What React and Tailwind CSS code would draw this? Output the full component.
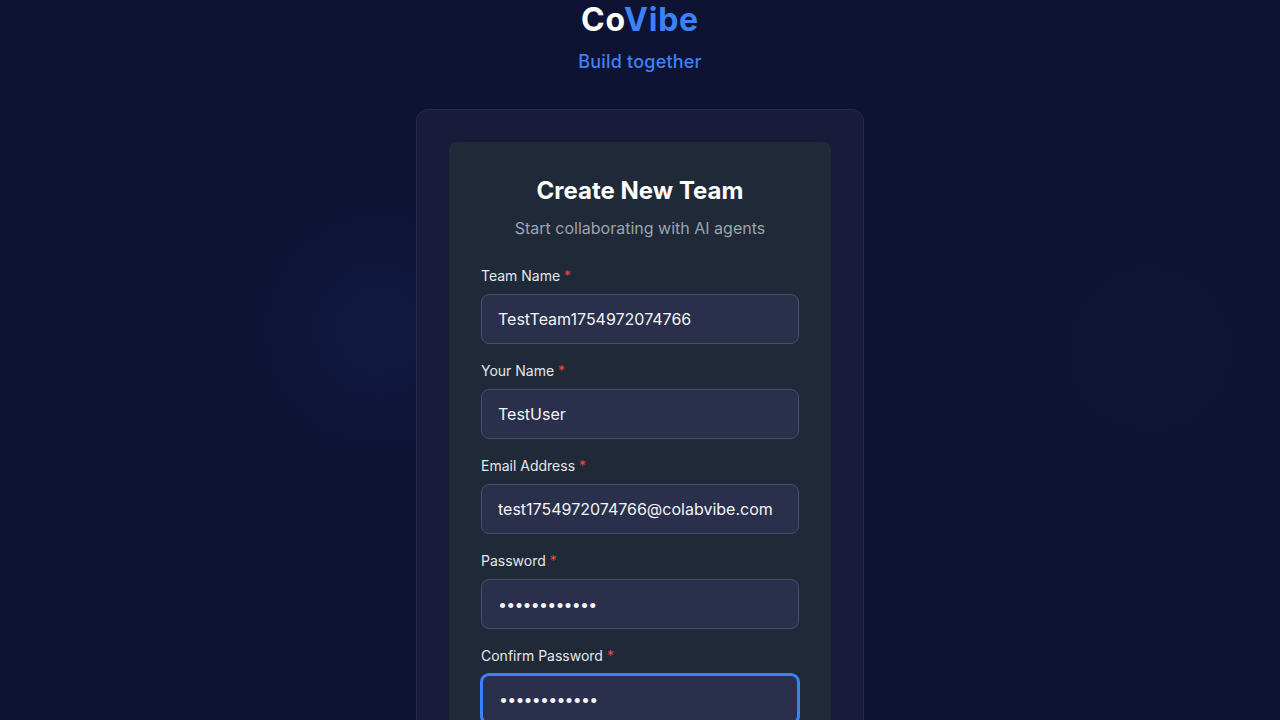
const fields = [
  { label: "Team Name", type: "text", value: "TestTeam1754972074766" },
  { label: "Your Name", type: "text", value: "TestUser" },
  { label: "Email Address", type: "email", value: "test1754972074766@colabvibe.com" },
  { label: "Password", type: "password", value: "password1234" },
  { label: "Confirm Password", type: "password", value: "password1234", focused: true },
];

export default function App() {
  return (
    <div className="relative min-h-screen h-[720px] overflow-hidden bg-[#0e1333] font-['Inter','Noto_Sans',sans-serif] text-white">
      {/* faint background glows */}
      <div className="pointer-events-none absolute left-[230px] top-[180px] h-[300px] w-[300px] rounded-full bg-[radial-gradient(circle,rgba(25,40,100,0.3)_0%,rgba(14,19,51,0)_70%)]" />
      <div className="pointer-events-none absolute left-[950px] top-[150px] h-[400px] w-[400px] rounded-full bg-[radial-gradient(circle,rgba(35,35,80,0.12)_0%,rgba(14,19,51,0)_70%)]" />

      <div className="relative flex flex-col items-center pt-[2px]">
        <h1 className="text-[32px] font-bold leading-9 tracking-[0.8px]">
          Co<span className="text-[#3b82f6]">Vibe</span>
        </h1>
        <p className="mt-[10px] text-lg font-medium leading-7 tracking-[0.2px] text-[#3b82f6]">Build together</p>

        <div className="mt-[33px] w-[448px] rounded-xl border border-[#262b4a] bg-[#181c3a] p-8">
          <div className="rounded-lg bg-[#1f2937] px-8 pt-[33px] pb-8">
            <h2 className="text-center text-2xl font-bold leading-8 text-white">Create New Team</h2>
            <p className="mt-[9px] text-center text-base leading-6 text-[#9ca3af]">
              Start collaborating with AI agents
            </p>

            <form className="mt-[26px] flex flex-col gap-[17px]">
              {fields.map((f) => (
                <div key={f.label} className="flex flex-col">
                  <label className="mb-2 text-sm font-normal leading-5 text-[#e5e7eb]">
                    {f.label} <span className="text-[#ef4444]">*</span>
                  </label>
                  <input
                    type={f.type}
                    defaultValue={f.value}
                    className={
                      f.focused
                        ? "h-[50px] w-full rounded-lg border-2 border-[#3b82f6] bg-[#2a2f4b] px-[16px] text-base tracking-[-0.8px] text-[#f3f4f6] outline-none ring-1 ring-[#3b82f6]"
                        : f.type === "password"
                        ? "h-[50px] w-full rounded-lg border border-[#474e6b] bg-[#2a2f4b] px-[16px] text-base tracking-[-0.8px] text-[#f3f4f6] outline-none"
                        : "h-[50px] w-full rounded-lg border border-[#474e6b] bg-[#2a2f4b] px-[16px] text-base text-[#f3f4f6] outline-none"
                    }
                  />
                </div>
              ))}
            </form>
          </div>
        </div>
      </div>
    </div>
  );
}
